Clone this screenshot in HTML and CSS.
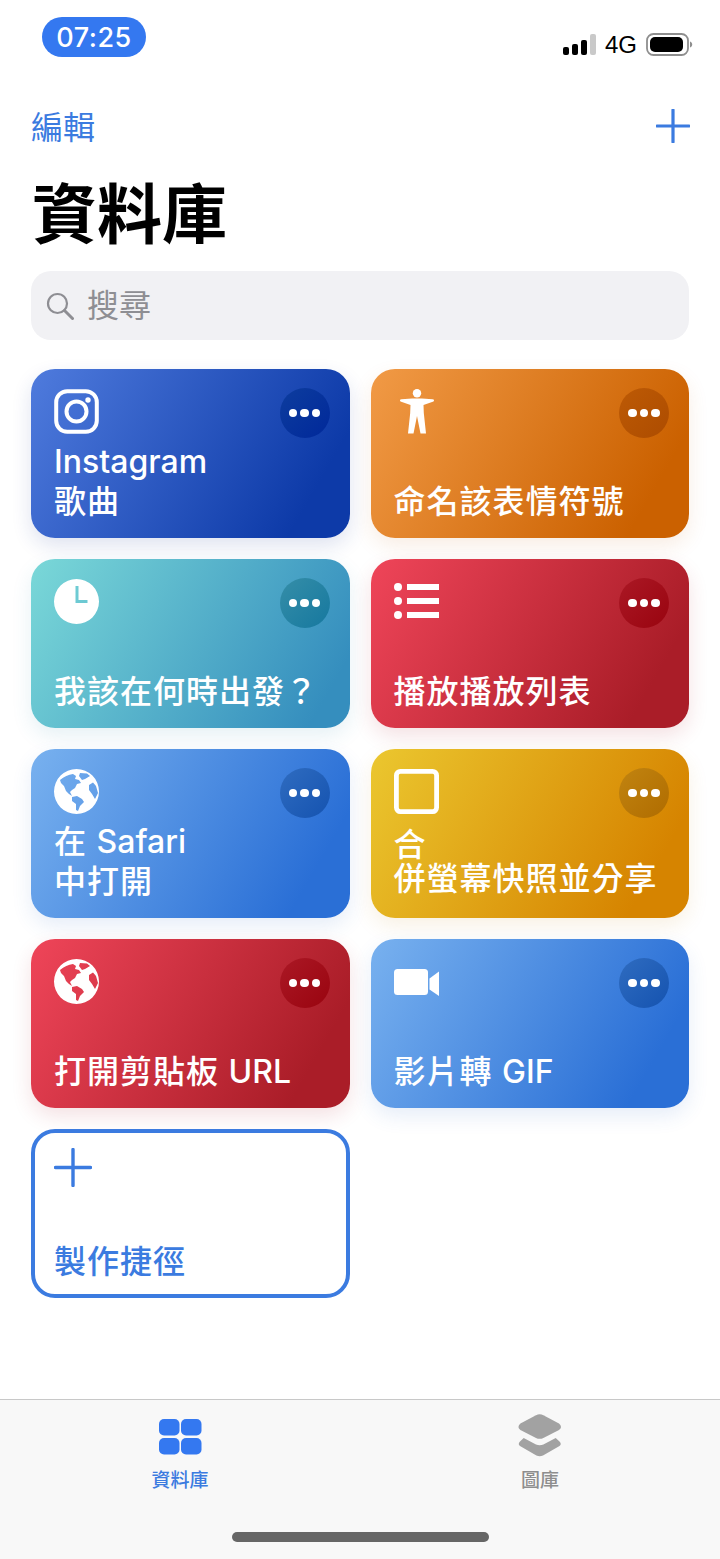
FILE: index.html
```html
<!DOCTYPE html>
<html lang="zh-Hant">

<head>
    <meta charset="UTF-8">
    <meta name="viewport" content="width=device-width, initial-scale=1.0">
    <title>資料庫</title>
    <link rel="stylesheet" href="styles.css">
</head>

<body>
    <div class="page">

        <div class="status-bar">
            <span class="time-pill">07:25</span>
            <div class="status-right">
                <div class="signal">
                    <i class="bar bar-1"></i>
                    <i class="bar bar-2"></i>
                    <i class="bar bar-3"></i>
                    <i class="bar bar-4"></i>
                </div>
                <span class="network">4G</span>
                <svg class="battery" width="47" height="23" viewBox="0 0 47 23">
                    <rect x="1" y="1" width="41" height="21" rx="6.500" fill="none" stroke="#8e8e8e" stroke-width="1.800"/>
                    <rect x="4" y="4" width="33" height="15" rx="5" fill="#000"/>
                    <path d="M44 8.500c1.500.6 2.200 1.600 2.200 3s-.7 2.400-2.200 3z" fill="#8e8e8e"/>
                </svg>
            </div>
        </div>

        <div class="nav-row">
            <span class="nav-edit">編輯</span>
            <svg class="nav-add" width="34" height="34" viewBox="0 0 34 34">
                <path d="M17 1v32M1 17h32" stroke="#3b7be0" stroke-width="3.200" fill="none" stroke-linecap="round"/>
            </svg>
        </div>

        <h1 class="title">資料庫</h1>

        <div class="search">
            <svg width="28" height="28" viewBox="0 0 28 28">
                <circle cx="11.500" cy="11.500" r="9.500" fill="none" stroke="#8e8e93" stroke-width="2.200"/>
                <path d="M18.500 18.500l8 8" stroke="#8e8e93" stroke-width="3" stroke-linecap="round"/>
            </svg>
            <span>搜尋</span>
        </div>

        <div class="card-grid">

            <div class="card card-navy">
                <div class="card-top">
                    <svg class="card-icon" viewBox="0 0 45 45">
                        <rect x="2.200" y="2.200" width="40.600" height="40.600" rx="11" fill="none" stroke="#fff" stroke-width="4"/>
                        <circle cx="22.500" cy="22.500" r="10" fill="none" stroke="#fff" stroke-width="4"/>
                        <circle cx="34" cy="11" r="2.700" fill="#fff"/>
                    </svg>
                    <div class="more"><i></i><i></i><i></i></div>
                </div>
                <div class="card-name"><span class="latin">Instagram</span><br>歌曲</div>
            </div>

            <div class="card card-orange">
                <div class="card-top">
                    <svg class="card-icon" viewBox="0 0 45 45">
                        <circle cx="23" cy="4.200" r="4.200" fill="#fff"/>
                        <path d="M6.500 12.500Q5 10.500 7.500 10.300L18 9.500H28L38.500 10.300Q41 10.500 39.500 12.500L29.500 16L29.800 24L32 44.500H26.500L23 27L19.500 44.500H14L16.200 24L16.500 16z" fill="#fff"/>
                    </svg>
                    <div class="more"><i></i><i></i><i></i></div>
                </div>
                <div class="card-name">命名該表情符號</div>
            </div>

            <div class="card card-teal">
                <div class="card-top">
                    <svg class="card-icon" viewBox="0 0 45 45">
                        <path fill-rule="evenodd" d="M22.500 0a22.500 22.500 0 1 0 0 45a22.500 22.500 0 1 0 0-45zM21.500 7h3v14h9v3h-12z" fill="#fff"/>
                    </svg>
                    <div class="more"><i></i><i></i><i></i></div>
                </div>
                <div class="card-name">我該在何時出發？</div>
            </div>

            <div class="card card-red">
                <div class="card-top">
                    <svg class="card-icon" viewBox="0 0 45 45">
                        <circle cx="4" cy="8" r="4" fill="#fff"/>
                        <circle cx="4" cy="22" r="4" fill="#fff"/>
                        <circle cx="4" cy="36" r="4" fill="#fff"/>
                        <rect x="13" y="5" width="32" height="6" fill="#fff"/>
                        <rect x="13" y="19" width="32" height="6" fill="#fff"/>
                        <rect x="13" y="33" width="32" height="6" fill="#fff"/>
                    </svg>
                    <div class="more"><i></i><i></i><i></i></div>
                </div>
                <div class="card-name">播放播放列表</div>
            </div>

            <div class="card card-sky">
                <div class="card-top">
                    <svg class="card-icon" viewBox="0 0 45 45">
                        <path fill-rule="evenodd" fill="#fff" d="M22.500 0a22.500 22.500 0 1 0 0 45a22.500 22.500 0 1 0 0-45zM6 11Q12 6 19 5L22 7L21 10L25 11L27 14L23 15L21 19L18 21L16 23L18 27L15 25L12 22L10 17L7 14zM26 4L33 4.500L36 7L31 10L28 11L25 7zM18 28L23 27L28 30L30 33L26 37L24 42L22 41L22 35L18 32zM35 16L39 13.500L42 17L44 24L41 30L38 25L35 21z"/>
                    </svg>
                    <div class="more"><i></i><i></i><i></i></div>
                </div>
                <div class="card-name"><span>在 <span class="latin">Safari</span></span><br>中打開</div>
            </div>

            <div class="card card-yellow">
                <div class="card-top">
                    <svg class="card-icon" viewBox="0 0 45 45">
                        <rect x="2.400" y="2.400" width="40.200" height="40.200" rx="4" fill="none" stroke="#fff" stroke-width="4.800"/>
                    </svg>
                    <div class="more"><i></i><i></i><i></i></div>
                </div>
                <div class="card-name card-name-tight">合<br>併螢幕快照並分享</div>
            </div>

            <div class="card card-red">
                <div class="card-top">
                    <svg class="card-icon" viewBox="0 0 45 45">
                        <path fill-rule="evenodd" fill="#fff" d="M22.500 0a22.500 22.500 0 1 0 0 45a22.500 22.500 0 1 0 0-45zM6 11Q12 6 19 5L22 7L21 10L25 11L27 14L23 15L21 19L18 21L16 23L18 27L15 25L12 22L10 17L7 14zM26 4L33 4.500L36 7L31 10L28 11L25 7zM18 28L23 27L28 30L30 33L26 37L24 42L22 41L22 35L18 32zM35 16L39 13.500L42 17L44 24L41 30L38 25L35 21z"/>
                    </svg>
                    <div class="more"><i></i><i></i><i></i></div>
                </div>
                <div class="card-name">打開剪貼板 <span class="latin">URL</span></div>
            </div>

            <div class="card card-sky">
                <div class="card-top">
                    <svg class="card-icon" viewBox="0 0 45 45">
                        <rect x="0" y="10" width="34" height="26" rx="3.500" fill="#fff"/>
                        <path d="M35.500 19.500L45 12.500v24.500l-9.500-6.500z" fill="#fff"/>
                    </svg>
                    <div class="more"><i></i><i></i><i></i></div>
                </div>
                <div class="card-name">影片轉 <span class="latin">GIF</span></div>
            </div>

            <div class="card card-new">
                <svg class="new-plus" width="38" height="39" viewBox="0 0 38 39">
                    <path d="M19 1.500v36M1.500 19.500h35" stroke="#3b7be0" stroke-width="3.400" fill="none" stroke-linecap="round"/>
                </svg>
                <div class="card-name">製作捷徑</div>
            </div>

        </div>

        <div class="tab-bar">
            <div class="tabs">
                <div class="tab tab-active">
                    <svg width="44" height="44" viewBox="0 0 44 44">
                        <rect x="1" y="4" width="20.500" height="16.500" rx="5" fill="#3478f0"/>
                        <rect x="23" y="4" width="20.500" height="16.500" rx="5" fill="#3478f0"/>
                        <rect x="1" y="23" width="20.500" height="16.500" rx="5" fill="#3478f0"/>
                        <rect x="23" y="23" width="20.500" height="16.500" rx="5" fill="#3478f0"/>
                    </svg>
                    <span>資料庫</span>
                </div>
                <div class="tab">
                    <svg width="44" height="44" viewBox="0 1 44 44">
                        <path d="M18 1.200Q21.700-.5 25.400 1.200L41 9.500Q45 13 41 16L25.400 24Q21.700 25.700 18 24L2.400 16Q-1.500 13 2.400 9.500z" fill="#a2a2a2"/>
                        <path d="M5.700 24L18 30.500Q21.700 32 25.400 30.500L37.700 24L41.500 27.500Q44 30 41.500 32L25 41.500Q21.700 43 18.400 41.500L2 32Q-.5 30 2 27.500z" fill="#a2a2a2"/>
                    </svg>
                    <span>圖庫</span>
                </div>
            </div>
            <div class="home-bar"></div>
        </div>

    </div>
</body>

</html>
```

FILE: styles.css
```css
/* General */
body {
    margin: 0;
    background-color: #fff;
    color: #000;
    font-family: Inter, "Noto Sans CJK TC", sans-serif;
}

.page {
    display: flex;
    flex-direction: column;
    height: 1559px;
    overflow: hidden;
}

/* Status bar */
.status-bar {
    display: flex;
    justify-content: space-between;
    align-items: flex-start;
    height: 109px;
    padding: 17px 27px 0 42px;
    box-sizing: border-box;
}

.time-pill {
    width: 104px;
    height: 40px;
    border-radius: 20px;
    background-color: #3478f0;
    color: #fff;
    font-size: 27px;
    font-weight: 500;
    line-height: 41px;
    letter-spacing: 0.5px;
    text-align: center;
}

.status-right {
    display: flex;
    align-items: center;
    margin-top: 16px;
    height: 23px;
}

.signal {
    display: flex;
    align-items: flex-end;
    gap: 3px;
    height: 21px;
    margin-left: 1px;
}

.bar {
    display: block;
    width: 6px;
    border-radius: 2px;
    background-color: #000;
}

.bar-1 { height: 8px; }
.bar-2 { height: 11px; }
.bar-3 { height: 15px; }
.bar-4 { height: 21px; background-color: #c9c9c9; }

.network {
    margin-left: 9px;
    font-family: "Liberation Sans", sans-serif;
    font-size: 24px;
    line-height: 22px;
}

.battery {
    margin-left: 9px;
}

/* Header */
.nav-row {
    display: flex;
    justify-content: space-between;
    align-items: center;
    height: 34px;
    padding: 0 30px 0 31px;
}

.nav-edit {
    margin-top: 3px;
    color: #3b7be0;
    font-size: 32px;
    line-height: 34px;
}

.title {
    margin: 36px 0 0 32px;
    height: 70px;
    font-size: 65px;
    font-weight: 700;
    line-height: 72px;
}

.search {
    display: flex;
    align-items: center;
    gap: 13px;
    height: 69px;
    margin: 22px 31px 0;
    padding-left: 15px;
    border-radius: 20px;
    background-color: #f1f1f4;
    color: #8e8e93;
    font-size: 32px;
}

.search span {
    margin-bottom: 5px;
}

/* Shortcut cards */
.card-grid {
    display: grid;
    grid-template-columns: repeat(2, 1fr);
    grid-auto-rows: 169px;
    gap: 21px;
    margin-top: 29px;
    padding: 0 31px;
}

.card {
    display: flex;
    flex-direction: column;
    padding: 19px 20px 16px 23px;
    box-sizing: border-box;
    border-radius: 24px;
    color: #fff;
}

.card-top {
    display: flex;
    justify-content: space-between;
    align-items: flex-start;
}

.card-icon {
    display: block;
    width: 45px;
    height: 45px;
    margin-top: 1px;
}

.more {
    display: flex;
    justify-content: center;
    align-items: center;
    gap: 3px;
    width: 50px;
    height: 50px;
    border-radius: 50%;
}

.more i {
    display: block;
    width: 8.500px;
    height: 8.500px;
    border-radius: 50%;
    background-color: #fff;
}

.card-name {
    margin-top: auto;
    font-size: 32px;
    font-weight: 500;
    line-height: 40px;
    letter-spacing: 1px;
    white-space: nowrap;
}

.latin {
    letter-spacing: 0;
}

.card-name-tight {
    line-height: 34px;
    margin-bottom: 6px;
}

.card-navy {
    background: linear-gradient(120deg, #4f7bdd, #0d3aa8 85%);
    box-shadow: 0 8px 20px rgba(30, 60, 150, 0.14);
}

.card-navy .more {
    background: linear-gradient(135deg, #0d3d9e, #00289a);
}

.card-orange {
    background: linear-gradient(120deg, #f19a46, #cb6100 85%);
    box-shadow: 0 8px 20px rgba(200, 110, 30, 0.12);
}

.card-orange .more {
    background: linear-gradient(135deg, #bd5a05, #ad4c00);
}

.card-teal {
    background: linear-gradient(120deg, #7ad8d8, #358ebe 90%);
    box-shadow: 0 8px 20px rgba(50, 140, 170, 0.12);
}

.card-teal .more {
    background: linear-gradient(135deg, #358ea8, #16789f);
}

.card-red {
    background: linear-gradient(120deg, #ef4559, #aa1d28 85%);
    box-shadow: 0 8px 20px rgba(180, 40, 60, 0.14);
}

.card-red .more {
    background: linear-gradient(135deg, #ab1825, #99040f);
}

.card-sky {
    background: linear-gradient(120deg, #78b1ef, #2a6fd6 85%);
    box-shadow: 0 8px 20px rgba(50, 110, 200, 0.12);
}

.card-sky .more {
    background: linear-gradient(135deg, #2f6cc0, #1553b0);
}

.card-yellow {
    background: linear-gradient(120deg, #ebc72f, #d68400 85%);
    box-shadow: 0 8px 20px rgba(200, 140, 30, 0.12);
}

.card-yellow .more {
    background: linear-gradient(135deg, #c18410, #b06c00);
}

.card-new {
    padding: 15px 19px 12px 19px;
    border: 4px solid #3b7be0;
    color: #3b7be0;
}

.new-plus {
    display: block;
}

/* Tab bar */
.tab-bar {
    display: flex;
    flex-direction: column;
    align-items: center;
    margin-top: auto;
    height: 160px;
    box-sizing: border-box;
    border-top: 1px solid #c8c8c8;
    background-color: #f8f8f8;
}

.tabs {
    display: grid;
    grid-template-columns: repeat(2, 1fr);
    width: 100%;
    padding-top: 15px;
}

.tab {
    display: flex;
    flex-direction: column;
    align-items: center;
    color: #8e8e8e;
    font-size: 19px;
    font-weight: 500;
    line-height: 24px;
}

.tab svg {
    display: block;
    margin-bottom: 10px;
    overflow: visible;
}

.tab-active {
    color: #3b7be0;
}

.home-bar {
    width: 257px;
    height: 10px;
    margin-top: 39px;
    border-radius: 5px;
    background-color: #666;
}
```
